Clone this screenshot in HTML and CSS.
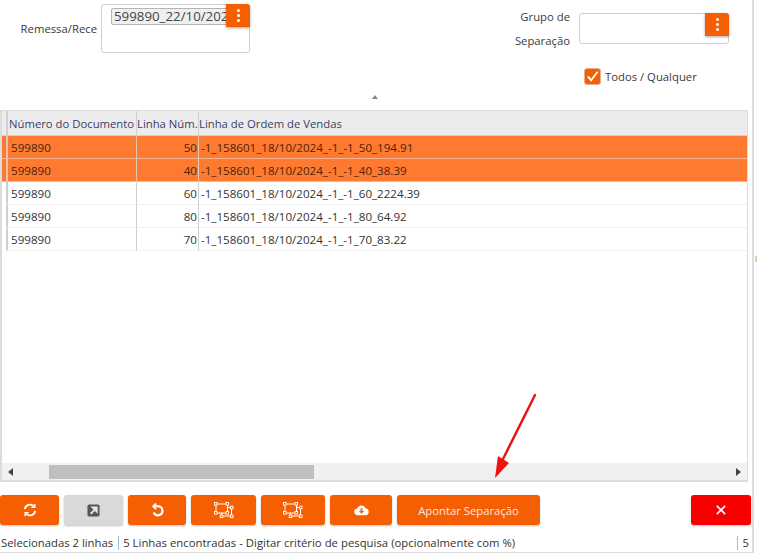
FILE: index.html
```html
<!DOCTYPE html>
<html lang="pt">
<head>
<meta charset="utf-8">
<title>Apontar Separação</title>
<link rel="stylesheet" href="styles.css">
</head>
<body>
<svg width="0" height="0" class="defs">
  <defs>
    <symbol id="shapes" viewBox="0 0 20 17">
      <g fill="none" stroke="currentColor" stroke-width="1">
        <rect x="2" y="2" width="11.500" height="9"/>
        <path d="M13.500 5.500h4v8.500H7.500V11"/>
        <g fill="#f55f02" stroke-width="0.900">
          <rect x="0.500" y="0.500" width="2.600" height="2.600"/>
          <rect x="12" y="0.500" width="2.600" height="2.600"/>
          <rect x="0.500" y="9.500" width="2.600" height="2.600"/>
          <rect x="12" y="9.500" width="2.600" height="2.600"/>
          <rect x="16.400" y="4.200" width="2.600" height="2.600"/>
          <rect x="16.400" y="13" width="2.600" height="2.600"/>
          <rect x="6.200" y="13" width="2.600" height="2.600"/>
        </g>
      </g>
    </symbol>
  </defs>
</svg>
<div class="app">
  <header class="filters">
    <div class="field field-left">
      <label class="field-label">Remessa/Rece</label>
      <div class="input input-tall">
        <span class="tag">599890_22/10/2024</span>
        <button class="menu-btn menu-tall" aria-label="Menu"><i></i><i></i><i></i></button>
      </div>
    </div>
    <div class="right-col">
      <div class="field field-right">
        <label class="field-label label-wrap">Grupo de Separação</label>
        <div class="input input-short">
          <button class="menu-btn menu-short" aria-label="Menu"><i></i><i></i><i></i></button>
        </div>
      </div>
      <div class="check-row">
        <span class="check">
          <svg viewBox="0 0 16 16" width="16" height="16"><path d="M3 8.500l3.500 4L13.500 3.500" fill="none" stroke="#fff" stroke-width="2"/></svg>
        </span>
        <span>Todos / Qualquer</span>
      </div>
    </div>
    <span class="caret"></span>
  </header>

  <section class="grid">
    <div class="grid-body">
      <table class="table">
        <colgroup><col class="c0"><col class="c1"><col class="c2"><col class="c3"></colgroup>
        <thead>
          <tr><th></th><th>Número do Documento</th><th>Linha Núm.</th><th>Linha de Ordem de Vendas</th></tr>
        </thead>
        <tbody>
          <tr class="sel"><td></td><td>599890</td><td class="num">50</td><td>-1_158601_18/10/2024_-1_-1_50_194.91</td></tr>
          <tr class="sel"><td></td><td>599890</td><td class="num">40</td><td>-1_158601_18/10/2024_-1_-1_40_38.39</td></tr>
          <tr><td></td><td>599890</td><td class="num">60</td><td>-1_158601_18/10/2024_-1_-1_60_2224.39</td></tr>
          <tr><td></td><td>599890</td><td class="num">80</td><td>-1_158601_18/10/2024_-1_-1_80_64.92</td></tr>
          <tr><td></td><td>599890</td><td class="num">70</td><td>-1_158601_18/10/2024_-1_-1_70_83.22</td></tr>
        </tbody>
      </table>
    </div>
    <div class="hscroll">
      <span class="arrow-l"></span>
      <div class="track"><div class="thumb"></div></div>
      <span class="arrow-r"></span>
    </div>
  </section>

  <footer class="toolbar">
    <button class="btn w59" aria-label="Atualizar">
      <svg viewBox="0 0 16 16" width="14" height="14" fill="none" stroke="#fff" stroke-width="2.200"><path d="M2 7a6 6 0 0 1 10.500-3"/><path d="M14 9a6 6 0 0 1-10.500 3"/><path d="M13.500 1v4h-4" stroke-width="1.600"/><path d="M2.500 15v-4h4" stroke-width="1.600"/></svg>
    </button>
    <button class="btn btn-off w59" aria-label="Abrir">
      <svg viewBox="0 0 14 14" width="13" height="13"><rect width="13" height="13" x="0.500" y="0.500" rx="2" fill="#555"/><path d="M4 10.500L9 5.500M6 3.700h4.500v4.500z" stroke="#e6e6e6" stroke-width="2" fill="#e6e6e6"/></svg>
    </button>
    <button class="btn w58" aria-label="Desfazer">
      <svg viewBox="0 0 16 16" width="15" height="15" fill="none" stroke="#fff" stroke-width="2.300"><path d="M4 3.500h4.500a4.800 4.800 0 1 1-4.500 6.500"/><path d="M6.500 0.500l-3 3 3 3" stroke-width="2"/></svg>
    </button>
    <button class="btn w65" aria-label="Seleção"><svg width="20" height="17" class="ico-shapes"><use href="#shapes"/></svg></button>
    <button class="btn w64" aria-label="Seleção"><svg width="20" height="17" class="ico-shapes"><use href="#shapes"/></svg></button>
    <button class="btn w62" aria-label="Baixar">
      <svg viewBox="0 0 16 12" width="15" height="12"><path d="M4 11.500a3.500 3.500 0 0 1-.5-7A4.800 4.800 0 0 1 12.500 4 3.800 3.800 0 0 1 12.500 11.500z" fill="#fff"/><path d="M7 4h2v3h2l-3 3-3-3h2z" fill="#f55f02"/></svg>
    </button>
    <button class="btn btn-text">Apontar Separação</button>
    <button class="btn btn-close" aria-label="Fechar">
      <svg viewBox="0 0 12 12" width="10" height="10"><path d="M1 1l10 10M11 1L1 11" stroke="#fff" stroke-width="2"/></svg>
    </button>
  </footer>

  <div class="status">
    <span class="st st-a">Selecionadas 2 linhas</span>
    <span class="st st-b">5 Linhas encontradas - Digitar critério de pesquisa (opcionalmente com %)</span>
    <span class="st st-c">5</span>
  </div>
</div>

<svg class="red-arrow" width="50" height="90" viewBox="0 0 50 90">
  <path d="M43 2L10 68" stroke="#f01010" stroke-width="2.400" fill="none" stroke-linecap="round"/>
  <path d="M3 85L6 63L17 70z" fill="#f01010"/>
</svg>
<span class="edge-tick"></span>
</body>
</html>
```
FILE: styles.css
```css
* { box-sizing: border-box; }
html, body { margin: 0; padding: 0; height: 553px; overflow: hidden; background: #fff; }
body { font-family: "Open Sans", "Noto Sans", sans-serif; font-size: 11.300px; color: #333; position: relative; }
.defs { position: absolute; }
.app { width: 754px; height: 553px; border-right: 2px solid #dcdcdc; display: flex; flex-direction: column; border-bottom: 1px solid #ddd; }

.filters { height: 110px; flex: none; display: flex; justify-content: space-between; position: relative; }
.field { display: flex; align-items: flex-start; }
.field-left { padding-top: 4px; }
.field-left .field-label { width: 97px; text-align: right; padding-top: 16px; line-height: 18px; }
.field-label { color: #3a3a3a; }
.input { position: relative; background: #fff; border: 1px solid #cfcfcf; border-radius: 3px; }
.input-tall { width: 149px; height: 49px; margin-left: 4px; padding: 3px 0 0 9px; }
.tag { display: block; width: 125px; height: 17px; overflow: hidden; white-space: nowrap; background: #efefef; border: 1px solid #b5b5b5; border-radius: 2px; font-size: 13.300px; line-height: 14px; padding-left: 2px; color: #444; }
.right-col { width: 149px; margin-right: 23px; display: flex; flex-direction: column; align-items: flex-start; margin-left: auto; padding-top: 13px; }
.field-right { margin-left: -70px; }
.label-wrap { width: 60px; text-align: right; line-height: 24px; margin-top: -8px; }
.input-short { width: 150px; height: 31px; margin-left: 9px; }
.menu-btn { position: absolute; top: -1px; right: -1px; width: 24px; border: 0; border-radius: 0 3px 0 0; background: #f55f02; box-shadow: 0 1px 3px rgba(0,0,0,.35); display: flex; flex-direction: column; align-items: center; justify-content: center; gap: 2px; padding: 0; }
.menu-btn i { display: block; width: 3px; height: 3px; background: #fff; border-radius: 50%; }
.menu-tall, .menu-short { height: 23px; }
.check-row { display: flex; align-items: center; gap: 4px; margin: 14px 0 0 4px; color: #3a3a3a; height: 18px; }
.check { width: 17px; height: 17px; background: #f55f02; border: 1px solid #e0b090; border-radius: 3px; display: flex; align-items: center; justify-content: center; }
.caret { position: absolute; left: 372px; top: 95px; border: 3.500px solid transparent; border-top: 0; border-bottom: 4px solid #888; }

.grid { height: 372px; flex: none; margin: 0 4px 0 0; display: flex; flex-direction: column; border: 2px solid #dcdcdc; border-width: 1px 1px 2px 2px; }
.grid-body { flex: 1; overflow: hidden; }
.table { border-collapse: separate; border-spacing: 0; table-layout: fixed; width: 747px; }
.c0 { width: 6px; } .c1 { width: 129px; } .c2 { width: 62px; } .c3 { width: 550px; }
.table th { height: 25px; padding: 0; background: #ececec; border-right: 1px solid #cfcfcf; border-bottom: 1px solid #cfcfcf; font-weight: 400; text-align: left; color: #3c3c6a; white-space: nowrap; overflow: hidden; }
.table th:first-child { background: #ececec; border-right: 2px solid #d0d0d0; }
.table td:first-child { background: #fff; border-right: 2px solid #d0d0d0; border-bottom-color: #fff; }
.table th:nth-child(2) { padding-left: 1px; }
.table th:last-child, .table td:last-child { border-right: 0; }
.table td { height: 23px; padding: 0 2px 0 3px; font-size: 11.600px; border-right: 1px solid #cfcfcf; border-bottom: 1px solid #f0f0f0; color: #333; white-space: nowrap; overflow: hidden; }
.table td.num { text-align: right; padding-right: 1px; }
.table td:last-child { padding-left: 2px; }
.table .sel td { background: #ff7a31; border-bottom: 1px solid #f6b48e; border-right-color: #e9c4ad; color: #4a2408; }
.table .sel td:first-child { background: #ff7a31; }

.hscroll { height: 17px; flex: none; background: #f0f0f0; display: flex; align-items: center; }
.arrow-l, .arrow-r { width: 0; height: 0; border: 4px solid transparent; flex: none; }
.arrow-l { border-right: 5px solid #444; border-left: 0; margin: 0 5px 0 6px; }
.arrow-r { border-left: 5px solid #444; border-right: 0; margin: 0 6px 0 5px; }
.track { flex: 1; height: 14px; margin-left: 31px; }
.thumb { width: 265px; height: 14px; background: #bfbfbf; }

.toolbar { height: 51px; flex: none; display: flex; align-items: flex-start; padding-top: 13px; gap: 5px; }
.btn { height: 30px; padding: 0; border: 0; border-radius: 3px; background: #f55f02; color: #fff; box-shadow: 0 1px 2px rgba(0,0,0,.25); display: flex; align-items: center; justify-content: center; font: inherit; flex: none; }
.w59 { width: 59px; } .w58 { width: 58px; } .w65 { width: 65px; } .w64 { width: 64px; } .w62 { width: 62px; }
.btn-off { background: #d9d9d9; }
.btn-text { width: 143px; color: #fde6d6; }
.btn-close { width: 60px; background: #f70000; margin-left: auto; margin-right: 1px; }
.ico-shapes { color: #fff; }

.status { flex: 1; display: flex; align-items: center; padding-left: 1px; color: #333; }
.st { line-height: 14px; }
.st-a { padding-right: 5px; border-right: 1px solid #9dbde0; }
.st-b { padding-left: 4px; flex: 1; letter-spacing: 0.030px; }
.st-c { padding: 0 3px 0 5px; border-left: 1px solid #9dbde0; }

.red-arrow { position: absolute; left: 492px; top: 393px; }
.edge-tick { position: absolute; left: 755px; top: 256px; width: 2px; height: 6px; background: #e8c9a8; }
```
